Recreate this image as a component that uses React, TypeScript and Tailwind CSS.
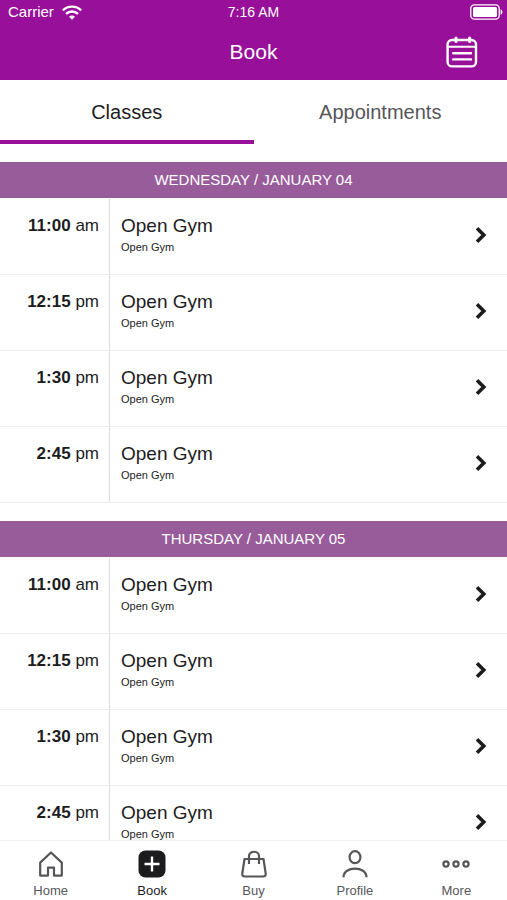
import { useState } from 'react'

const tabs = ['Classes', 'Appointments']

const slots = [
  { time: '11:00', period: 'am', title: 'Open Gym', location: 'Open Gym' },
  { time: '12:15', period: 'pm', title: 'Open Gym', location: 'Open Gym' },
  { time: '1:30', period: 'pm', title: 'Open Gym', location: 'Open Gym' },
  { time: '2:45', period: 'pm', title: 'Open Gym', location: 'Open Gym' },
]

const days = [
  { label: 'WEDNESDAY / JANUARY 04', slots },
  { label: 'THURSDAY / JANUARY 05', slots },
]

const WifiIcon = () => (
  <svg width="20" height="15" viewBox="0 0 20 15" fill="none" stroke="white" strokeWidth="2.4">
    <path d="M0.8 5.4C6 0.4 14 0.4 19.2 5.4" />
    <path d="M4 8.9C7.4 5.7 12.6 5.7 16 8.9" />
    <path d="M10 14.8L7 11.7C8.6 10.2 11.4 10.2 13 11.7Z" fill="white" stroke="none" />
  </svg>
)

const BatteryIcon = () => (
  <svg width="33" height="16" viewBox="0 0 33 16" fill="none">
    <rect x="0.8" y="0.8" width="28.4" height="14.4" rx="3.6" stroke="white" strokeWidth="1.3" />
    <rect x="3" y="3" width="24" height="10" rx="1.6" fill="white" />
    <path d="M30.6 5.2C33 6 33 10 30.6 10.8Z" fill="white" />
  </svg>
)

const CalendarIcon = () => (
  <svg width="32" height="32" viewBox="0 0 32 32" fill="none" stroke="white" strokeWidth="2.4" strokeLinecap="round">
    <rect x="1.6" y="4" width="28.4" height="26.4" rx="4.5" />
    <path d="M1.6 10.8H30" strokeWidth="2" />
    <path d="M10 2V5.5M23.6 2V5.5" strokeWidth="3" />
    <path d="M7.2 17.2H25M7.2 23.4H25" />
  </svg>
)

const ChevronIcon = () => (
  <svg width="12" height="18" viewBox="0 0 12 18" fill="none" stroke="#1c1c1e" strokeWidth="3.6">
    <path d="M2 2.2L8.8 9L2 15.8" />
  </svg>
)

const HomeIcon = () => (
  <svg width="28" height="28" viewBox="0 0 28 28" fill="none" stroke="currentColor" strokeWidth="2.2" strokeLinejoin="round">
    <path d="M14 2.5L3.2 12.6V25.6H11V17.6H17V25.6H24.8V12.6Z" />
  </svg>
)

const BookIcon = () => (
  <svg width="28" height="28" viewBox="0 0 28 28" fill="none">
    <rect x="0.5" y="0.5" width="27" height="27" rx="7" fill="#1c1c1e" />
    <path d="M14 6.5V21.5M6.5 14H21.5" stroke="white" strokeWidth="2.4" />
  </svg>
)

const BuyIcon = () => (
  <svg width="28" height="28" viewBox="0 0 28 28" fill="none" stroke="currentColor" strokeWidth="2.2" strokeLinejoin="round">
    <path d="M4.5 9H23.5L25.7 23.5Q26 26.5 23 26.5H5Q2 26.5 2.3 23.5Z" />
    <path d="M9 14V6C9 0.3 19 0.3 19 6V14" />
  </svg>
)

const ProfileIcon = () => (
  <svg width="28" height="28" viewBox="0 0 28 28" fill="none" stroke="currentColor" strokeWidth="2.2">
    <ellipse cx="14" cy="7.2" rx="5.4" ry="6" />
    <path d="M2.5 27.2C2.5 15.8 25.5 15.8 25.5 27.2" />
  </svg>
)

const MoreIcon = () => (
  <svg width="28" height="28" viewBox="0 0 28 28" fill="none" stroke="currentColor" strokeWidth="2.2">
    <circle cx="4" cy="14" r="2.6" />
    <circle cx="14" cy="14" r="2.6" />
    <circle cx="24" cy="14" r="2.6" />
  </svg>
)

const navItems = [
  { label: 'Home', Icon: HomeIcon },
  { label: 'Book', Icon: BookIcon },
  { label: 'Buy', Icon: BuyIcon },
  { label: 'Profile', Icon: ProfileIcon },
  { label: 'More', Icon: MoreIcon },
]

const App = () => {
  const [activeTab, setActiveTab] = useState('Classes')
  const [activeNav, setActiveNav] = useState('Book')

  return (
    <div className="flex h-screen flex-col bg-white font-['Liberation_Sans',Arial,sans-serif] text-[#1c1c1e]">
      {/* HEADER */}
      <header className="shrink-0 bg-[#980f9a] text-white">
        <div className="grid h-6 grid-cols-3 items-center">
          <div className="flex items-center gap-2 pl-2">
            <span className="text-[15px] leading-6">Carrier</span>
            <WifiIcon />
          </div>
          <span className="text-center text-sm leading-6">7:16 AM</span>
          <div className="flex justify-end pr-1">
            <BatteryIcon />
          </div>
        </div>
        <div className="grid h-14 grid-cols-3 items-center px-[29px]">
          <h1 className="col-start-2 text-center text-[21px]">Book</h1>
          <button type="button" aria-label="Calendar" className="justify-self-end">
            <CalendarIcon />
          </button>
        </div>
      </header>

      {/* TABS */}
      <div role="tablist" className="flex h-16 shrink-0">
        {tabs.map((tab) => (
          <button
            key={tab}
            type="button"
            role="tab"
            aria-selected={activeTab === tab}
            onClick={() => setActiveTab(tab)}
            className={`flex-1 border-b-4 pt-1 text-xl ${
              activeTab === tab ? 'border-[#980f9a]' : 'border-transparent text-[#56565a]'
            }`}
          >
            {tab}
          </button>
        ))}
      </div>

      {/* SCHEDULE */}
      <main className="min-h-0 flex-1 overflow-y-auto [scrollbar-width:none]">
        {days.map((day) => (
          <section key={day.label} className="pt-[18px]">
            <h2 className="h-9 bg-[#985c9b] text-center text-[15px] leading-9 text-white">{day.label}</h2>
            <ul className="pt-px">
              {day.slots.map((slot) => (
                <li key={slot.time} className="border-b border-[#ececee]">
                  <button type="button" className="flex h-[75px] w-full text-left">
                    <span className="h-full w-[110px] shrink-0 border-r border-[#dcdce0] pr-[10px] pt-[15px] text-right text-[17px] leading-6">
                      <strong>{slot.time}</strong> {slot.period}
                    </span>
                    <span className="flex flex-1 flex-col pl-[11px] pt-[15px]">
                      <span className="text-[19px] leading-6">{slot.title}</span>
                      <span className="text-[11px] leading-[18px]">{slot.location}</span>
                    </span>
                    <span className="flex h-full items-center pb-1 pr-5">
                      <ChevronIcon />
                    </span>
                  </button>
                </li>
              ))}
            </ul>
          </section>
        ))}
      </main>

      {/* BOTTOM NAV */}
      <nav className="flex h-[60px] shrink-0 border-t border-[#f0f0f2] bg-white">
        {navItems.map(({ label, Icon }) => (
          <button
            key={label}
            type="button"
            onClick={() => setActiveNav(label)}
            className={`flex flex-1 flex-col items-center gap-[5px] pt-[9px] text-[13px] leading-4 ${
              activeNav === label ? 'text-[#1c1c1e]' : 'text-[#56565a]'
            }`}
          >
            <Icon />
            {label}
          </button>
        ))}
      </nav>
    </div>
  )
}

export default App
